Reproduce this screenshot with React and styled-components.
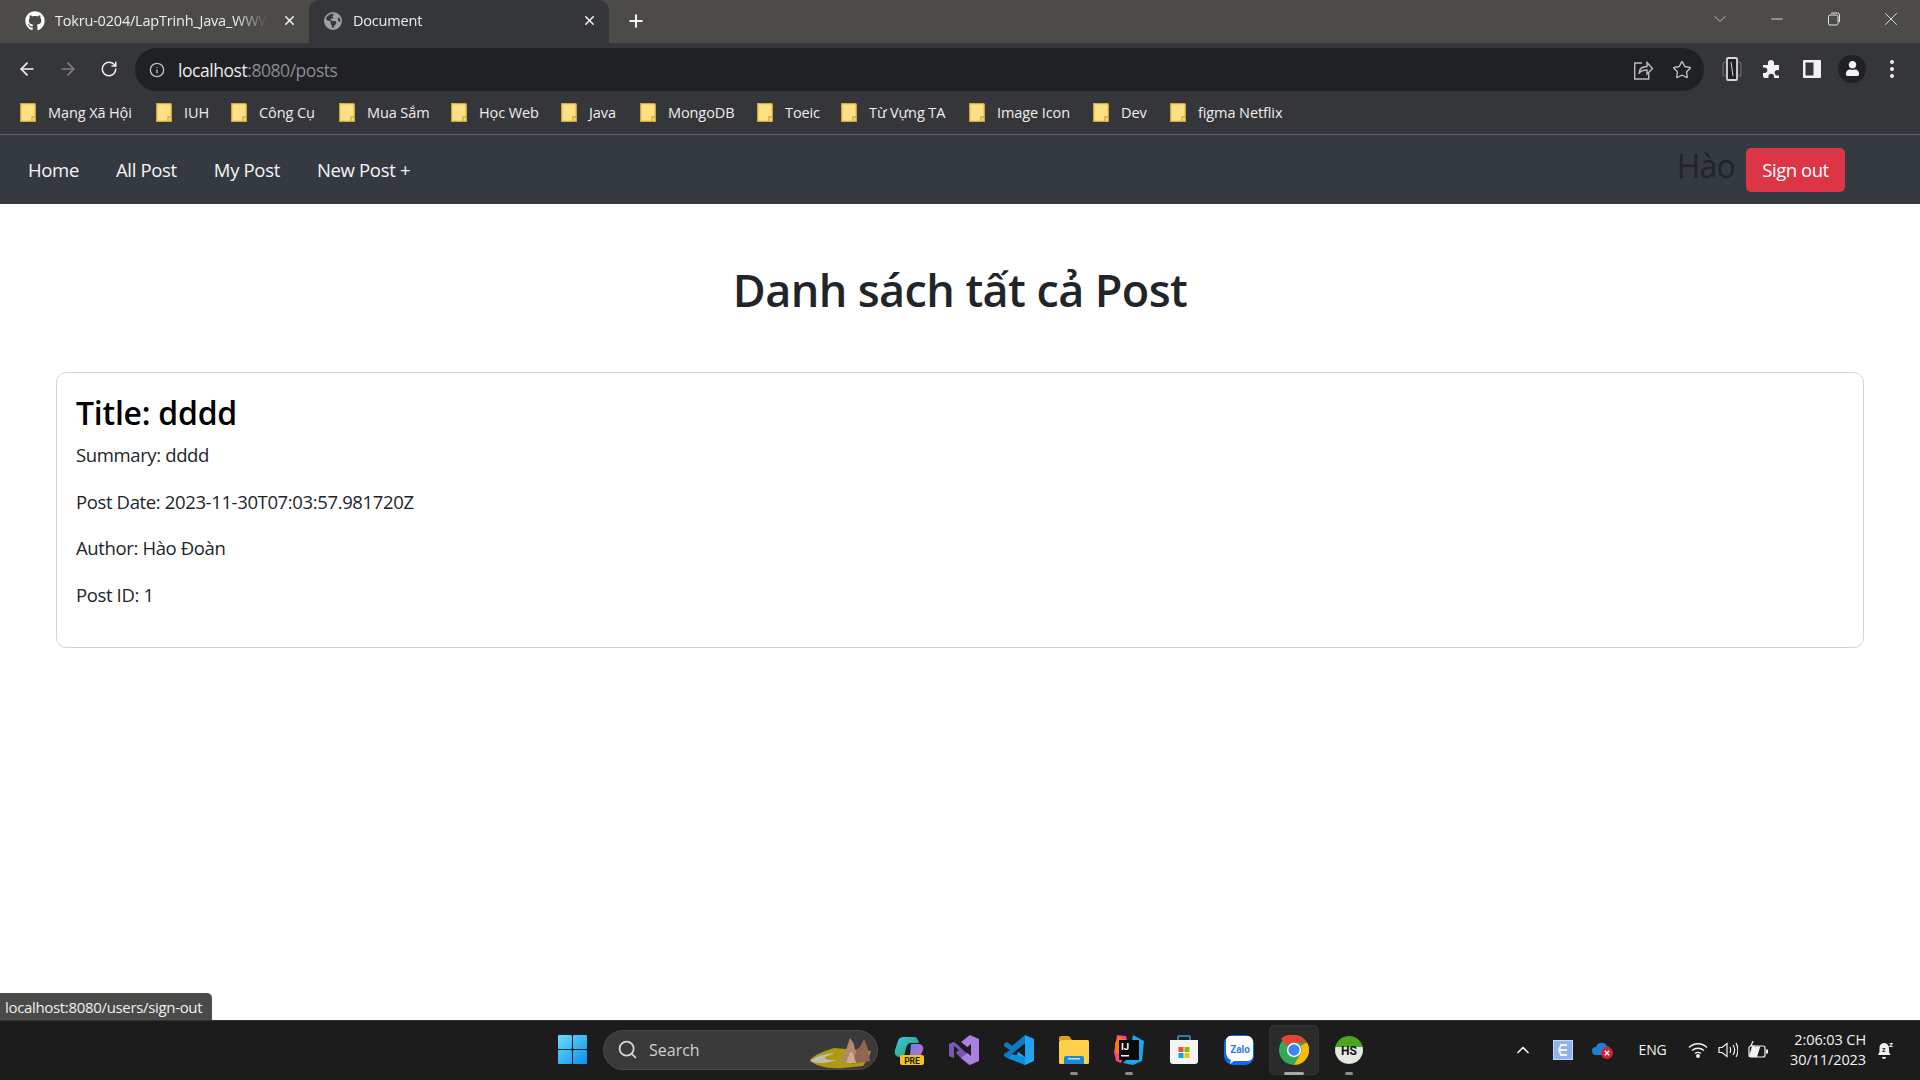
import styled, { createGlobalStyle } from 'styled-components';
import { ArrowLeft, ArrowRight, RotateCw, Info, Star, Plus, X, ChevronDown, ChevronUp, Minus, Search } from 'lucide-react';
import { FaGithub, FaUser } from 'react-icons/fa';
import { FaEarthAmericas } from 'react-icons/fa6';

const UI_FONT = `"Open Sans", "Noto Sans", sans-serif`;

const GlobalStyle = createGlobalStyle`
  html, body { margin: 0; padding: 0; background: #fff; }
  * { box-sizing: border-box; }
  body { font-family: ${UI_FONT}; overflow: hidden; }
`;

const bookmarks = [
  { name: 'Mạng Xã Hội', w: 86 },
  { name: 'IUH', w: 25 },
  { name: 'Công Cụ', w: 58 },
  { name: 'Mua Sắm', w: 62 },
  { name: 'Học Web', w: 60 },
  { name: 'Java', w: 29 },
  { name: 'MongoDB', w: 67 },
  { name: 'Toeic', w: 34 },
  { name: 'Từ Vựng TA', w: 78 },
  { name: 'Image Icon', w: 74 },
  { name: 'Dev', w: 27 },
  { name: 'figma Netflix', w: 85 },
];

const navLinks = ['Home', 'All Post', 'My Post', 'New Post +'];

const post = {
  title: 'dddd',
  summary: 'dddd',
  postDate: '2023-11-30T07:03:57.981720Z',
  author: 'Hào Đoàn',
  id: 1,
};

function FolderIcon() {
  return (
    <svg width="16" height="19" viewBox="0 0 16 19">
      <path d="M.7.7h13.6a1 1 0 0 1 1 1v16.6H.7z" fill="#fde083" stroke="#d1aa3f" strokeWidth="1.3" />
      <path d="M12 18v-4h3" fill="none" stroke="#d1aa3f" strokeWidth="1.3" />
    </svg>
  );
}

function ShareIcon() {
  return (
    <svg width="22" height="22" viewBox="0 0 22 22" fill="none" stroke="#b9babc" strokeWidth="1.4">
      <path d="M10 4H2.7v16h14v-6" />
      <path d="M7 15c0-5 3-7.500 8-7.500V3.500l5.500 6-5.500 5.500v-4c-4 0-6.500 1-8 3.500z" />
    </svg>
  );
}

function DeviceIcon() {
  return (
    <svg width="20" height="24" viewBox="0 0 20 24" fill="none">
      <rect x="1" y="5" width="18" height="14" rx="2" stroke="#6a6b6e" strokeWidth="1.2" />
      <rect x="5" y="1" width="10" height="22" rx="1" fill="#202124" stroke="#d8d8d8" strokeWidth="1.8" />
      <path d="M9 5l2 14" stroke="#d8d8d8" strokeWidth="1" />
    </svg>
  );
}

function PuzzleIcon() {
  return (
    <svg width="20" height="20" viewBox="0 0 20 20">
      <path d="M1 6h5V4a3 3 0 0 1 6 0v2h5v5h-1.500a2.800 2.800 0 0 0 0 5.600H17V19h-5v-1.500a2.800 2.800 0 0 0-5.600 0V19H3a2 2 0 0 1-2-2v-3h1.500a2.800 2.800 0 0 0 0-5.600H1z" fill="#f4f4f4" />
    </svg>
  );
}

function SidePanelIcon() {
  return (
    <svg width="18" height="18" viewBox="0 0 18 18">
      <rect width="18" height="18" rx="1" fill="#f1f1f1" />
      <rect x="2.500" y="2.500" width="8" height="13" fill="#35363a" />
    </svg>
  );
}

function RestoreIcon() {
  return (
    <svg width="14" height="14" viewBox="0 0 14 14" fill="none" stroke="#e6e6e6" strokeWidth="1">
      <rect x="1.500" y="3" width="9.500" height="10" rx="1.500" />
      <path d="M4 1h6.500a2 2 0 0 1 2 2v7" />
    </svg>
  );
}

function WindowsLogo() {
  return (
    <svg width="29" height="29" viewBox="0 0 29 29">
      <defs>
        <linearGradient id="winGrad" gradientUnits="userSpaceOnUse" x1="0" y1="0" x2="29" y2="29">
          <stop offset="0" stopColor="#6cdcfb" />
          <stop offset="1" stopColor="#0a8fee" />
        </linearGradient>
      </defs>
      <rect x="0" y="0" width="14" height="14" rx="1" fill="url(#winGrad)" />
      <rect x="15" y="0" width="14" height="14" rx="1" fill="url(#winGrad)" />
      <rect x="0" y="15" width="14" height="14" rx="1" fill="url(#winGrad)" />
      <rect x="15" y="15" width="14" height="14" rx="1" fill="url(#winGrad)" />
    </svg>
  );
}

function Mountains() {
  return (
    <svg width="64" height="34" viewBox="0 0 64 34">
      <path d="M1 25c4-5 14-9 24-12l37 3-2 6-6 9-20 2C18 34 6 31 1 25z" fill="#ad9a10" />
      <path d="M1 26c6-5 14-7 24-8-4 3-9 3-9 5 0 2 7 2 12 2-6 2-20 5-27 1z" fill="#bdbdb2" />
      <path d="M32 27l6-15 3-9 4 6 3 18z" fill="#b08770" />
      <path d="M43 29l5-15 3-2 4-8 4 10 2 12z" fill="#916651" />
      <path d="M37 28l4-11 3 1 3 10z" fill="#cfa994" />
    </svg>
  );
}

function CopilotIcon() {
  return (
    <svg width="30" height="30" viewBox="0 0 30 30">
      <defs>
        <linearGradient id="copA" x1="0" y1="0" x2="1" y2="1">
          <stop offset="0" stopColor="#35c8e8" />
          <stop offset="1" stopColor="#2f9e5f" />
        </linearGradient>
        <linearGradient id="copB" x1="0" y1="0" x2="1" y2="1">
          <stop offset="0" stopColor="#4c8df0" />
          <stop offset="1" stopColor="#e85cc8" />
        </linearGradient>
      </defs>
      <path d="M9 2h11c2 0 3 1 4 3l1 3h-8c-3 0-4 2-5 5l-2 9H6c-4 0-6-3-5-7l3-9c1-3 3-4 5-4z" fill="url(#copA)" />
      <path d="M17 9h8c3 0 5 3 4 6l-3 7c-1 2-3 3-5 3h-8c2-1 2-3 3-5l1-11z" fill="url(#copB)" />
      <rect x="6" y="20" width="24" height="10" rx="2" fill="#f6c21c" />
      <text x="18" y="28.500" textAnchor="middle" fontSize="8.500" fontWeight="700" fontFamily="Roboto, sans-serif" fill="#1c1c1c">PRE</text>
    </svg>
  );
}

function VisualStudioIcon() {
  return (
    <svg width="30" height="30" viewBox="0 0 30 30">
      <path d="M0 9l5-2 17 15-2 8-6-5L5 16z" fill="#7a55b2" />
      <path d="M0 9l5-2 6 5-6 5 0 6-5-2z" fill="#7d59b3" />
      <path d="M21 0l9 4v22l-9 4-9-7 10-8-10-8z" fill="#a97fe4" />
      <path d="M5 11l5 4-5 4z" fill="#1c1c1c" />
      <path d="M22 9v12l-7-6z" fill="#1c1c1c" />
    </svg>
  );
}

function VsCodeIcon() {
  return (
    <svg width="30" height="30" viewBox="0 0 30 30">
      <path d="M21 0l9 4v22l-9 4-9-8z" fill="#22a5ee" />
      <path d="M21 8v14l-9-7z" fill="#1c1c1c" />
      <path d="M21 0v8L8 19l-5 4-3-2 0-2 6-4-6-4V9l3-2 5 4z" fill="#0a7cc4" />
      <path d="M8 19l13 3v8L3 23z" fill="#0f8fd8" />
    </svg>
  );
}

function ExplorerIcon() {
  return (
    <svg width="30" height="28" viewBox="0 0 30 28">
      <path d="M0 2a2 2 0 0 1 2-2h8l3 4h-13z" fill="#d9a010" />
      <rect y="4" width="30" height="24" rx="1.500" fill="#fcd04a" />
      <path d="M5 22a2 2 0 0 1 2-2h16a2 2 0 0 1 2 2v6H5z" fill="#1f87d8" />
      <rect x="9" y="22" width="12" height="1.500" fill="#bfe3ff" />
    </svg>
  );
}

function IntellijIcon() {
  return (
    <svg width="30" height="30" viewBox="0 0 30 30">
      <path d="M3 0l9 1 2 8-7 19-5-2-2-9z" fill="#fd3d8e" />
      <path d="M1 8l4-6 6 2-5 14-4 1z" fill="#f97a12" />
      <path d="M19 0l11 6-2 20-9 4-10-2 6-6z" fill="#1aa7ec" />
      <rect x="5" y="5" width="20" height="20" fill="#0a0a0a" />
      <text x="7" y="14.500" fontSize="9.500" fontWeight="700" fontFamily="Roboto, sans-serif" fill="#fff">IJ</text>
      <rect x="7" y="20" width="8" height="1.500" fill="#fff" />
    </svg>
  );
}

function StoreIcon() {
  return (
    <svg width="30" height="30" viewBox="0 0 30 30">
      <path d="M9 5V2a1 1 0 0 1 1-1h10a1 1 0 0 1 1 1v3" fill="none" stroke="#19a7e8" strokeWidth="1.500" />
      <path d="M1 5h28v21a3 3 0 0 1-3 3H4a3 3 0 0 1-3-3z" fill="#f4f4f4" />
      <rect x="9.500" y="12" width="5" height="5" fill="#f35325" />
      <rect x="15.500" y="12" width="5" height="5" fill="#81bc06" />
      <rect x="9.500" y="18" width="5" height="5" fill="#05a6f0" />
      <rect x="15.500" y="18" width="5" height="5" fill="#ffba08" />
    </svg>
  );
}

function ZaloIcon() {
  return (
    <svg width="30" height="30" viewBox="0 0 30 30">
      <rect width="30" height="30" rx="9" fill="#0f6cf2" />
      <path d="M7 1h16c4 0 6 3 6 6v14c0 3-3 5-6 5H10l-4 3 1-4C3 23 2 20 2 16V6c0-3 2-5 5-5z" fill="#fff" />
      <text x="16" y="18" textAnchor="middle" fontSize="10" fontWeight="700" fontFamily="Roboto, sans-serif" fill="#2f7cf0">Zalo</text>
    </svg>
  );
}

function ChromeIcon() {
  return (
    <svg width="30" height="30" viewBox="0 0 30 30">
      <circle cx="15" cy="15" r="15" fill="#34a853" />
      <path d="M15 0a15 15 0 0 1 13 7.500H15a7.500 7.500 0 0 0-6.500 3.750L2 3.500A15 15 0 0 1 15 0z" fill="#ea4335" />
      <path d="M28 7.500A15 15 0 0 1 15 30l6.500-11.250A7.500 7.500 0 0 0 21.500 11z" fill="#fbbc04" />
      <circle cx="15" cy="15" r="7.200" fill="#fff" />
      <circle cx="15" cy="15" r="5.700" fill="#4285f4" />
    </svg>
  );
}

function HsIcon() {
  return (
    <svg width="28" height="28" viewBox="0 0 28 28">
      <circle cx="14" cy="14" r="14" fill="#4aa61d" />
      <path d="M0.500 11h27a14 14 0 0 1-.5 8 14 14 0 0 1-26 0 14 14 0 0 1-.5-8z" fill="#e6e8e2" />
      <text x="14" y="18.500" textAnchor="middle" fontSize="12" fontWeight="700" fontFamily="Roboto, sans-serif" fill="#111">HS</text>
    </svg>
  );
}

function TrayEIcon() {
  return (
    <svg width="20" height="20" viewBox="0 0 20 20">
      <rect width="20" height="20" fill="#c3d9f7" />
      <rect x="1" y="1" width="18" height="18" fill="#8fb3ea" />
      <path d="M14 5H8l-2 5 2 5h6M7 10h7" fill="none" stroke="#f4f7ff" strokeWidth="1.800" />
    </svg>
  );
}

function TrayCloudIcon() {
  return (
    <svg width="22" height="20" viewBox="0 0 22 20">
      <path d="M4 15a4 4 0 0 1 0-8 6 6 0 0 1 11-1 4 4 0 0 1 2 7l-3 2z" fill="#1e7fd6" />
      <circle cx="15" cy="13" r="6" fill="#d9202f" />
      <path d="M12.800 10.800l4.400 4.400M17.200 10.800l-4.400 4.400" stroke="#fff" strokeWidth="1.400" />
    </svg>
  );
}

function WifiIcon() {
  return (
    <svg width="20" height="16" viewBox="0 0 20 16" fill="none" stroke="#f2f2f2" strokeWidth="1.400">
      <path d="M1 5.500c5-5 13-5 18 0" />
      <path d="M4 8.500c3.500-3 8.500-3 12 0" />
      <path d="M7 11.500c2-1.500 4-1.500 6 0" />
      <circle cx="10" cy="14" r="1.200" fill="#f2f2f2" />
    </svg>
  );
}

function SpeakerIcon() {
  return (
    <svg width="20" height="18" viewBox="0 0 20 18" fill="none" stroke="#f2f2f2" strokeWidth="1.200">
      <path d="M1 6.500h3l5-4v13l-5-4H1z" />
      <path d="M12 6c1 2 1 4 0 6" />
      <path d="M15 4c2 3 2 7 0 10" />
      <path d="M18 2c2.500 4 2.500 10 0 14" />
    </svg>
  );
}

function BatteryIcon() {
  return (
    <svg width="21" height="18" viewBox="0 0 21 18" fill="none" stroke="#f2f2f2" strokeWidth="1.200">
      <rect x="1" y="5" width="16" height="11" rx="2" />
      <path d="M1.500 15.500l3-9.500h7l-3 9.500z" fill="#f2f2f2" />
      <rect x="18" y="8.500" width="2" height="4" fill="#f2f2f2" stroke="none" />
      <path d="M5 0L3 5h3l-1 3" stroke="#f2f2f2" />
    </svg>
  );
}

function BellIcon() {
  return (
    <svg width="18" height="20" viewBox="0 0 18 20">
      <path d="M7 3a5 5 0 0 0-4.500 5v4L1 15h12.500L12 12V8a5 5 0 0 0-5-5z" fill="#f2f2f2" />
      <path d="M5 17h4a2 2 0 0 1-4 0z" fill="#f2f2f2" />
      <text x="5" y="12" fontSize="7" fontWeight="700" fontFamily="Roboto, sans-serif" fill="#1c1c1c">z</text>
      <text x="12" y="7" fontSize="8" fontWeight="700" fontFamily="Roboto, sans-serif" fill="#f2f2f2">z</text>
    </svg>
  );
}

const taskbarApps = [
  { key: 'copilot', icon: <CopilotIcon /> },
  { key: 'vs', icon: <VisualStudioIcon /> },
  { key: 'vscode', icon: <VsCodeIcon /> },
  { key: 'explorer', icon: <ExplorerIcon />, running: true },
  { key: 'idea', icon: <IntellijIcon />, running: true },
  { key: 'store', icon: <StoreIcon /> },
  { key: 'zalo', icon: <ZaloIcon /> },
  { key: 'chrome', icon: <ChromeIcon />, active: true },
  { key: 'hs', icon: <HsIcon />, running: true },
];

export default function App() {
  return (
    <>
      <GlobalStyle />
      <Screen>
        <TabStrip>
          <Tab>
            <FaGithub size={20} color="#fff" />
            <TabTitle>Tokru-0204/LapTrinh_Java_WWW</TabTitle>
            <TabClose><X size={15} strokeWidth={2.5} /></TabClose>
          </Tab>
          <Tab $active>
            <FaEarthAmericas size={18} color="#9aa0a6" />
            <TabTitle>Document</TabTitle>
            <TabClose><X size={15} strokeWidth={2.5} /></TabClose>
          </Tab>
          <NewTab><Plus size={20} strokeWidth={2.5} /></NewTab>
          <WindowControls>
            <ChevronDown size={20} strokeWidth={1} color="#d8d8d8" />
            <WindowButton><Minus size={18} strokeWidth={1.2} /></WindowButton>
            <WindowButton><RestoreIcon /></WindowButton>
            <WindowButton><X size={22} strokeWidth={1} /></WindowButton>
          </WindowControls>
        </TabStrip>

        <Toolbar>
          <ToolButton><ArrowLeft size={20} /></ToolButton>
          <ToolButton $dim><ArrowRight size={20} /></ToolButton>
          <ToolButton><RotateCw size={18} /></ToolButton>
          <Omnibox>
            <Info size={16} color="#bdc1c6" />
            <Url>localhost<UrlRest>:8080/posts</UrlRest></Url>
            <OmniActions>
              <ShareIcon />
              <Star size={20} color="#c4c5c7" strokeWidth={1.6} />
            </OmniActions>
          </Omnibox>
          <ToolActions>
            <ToolButton $w={40}><DeviceIcon /></ToolButton>
            <ToolButton $w={40}><PuzzleIcon /></ToolButton>
            <ToolButton $w={40}><SidePanelIcon /></ToolButton>
            <ToolButton $w={40}><ProfileDot><FaUser size={15} /></ProfileDot></ToolButton>
            <ToolButton $w={40}><Kebab><i /><i /><i /></Kebab></ToolButton>
          </ToolActions>
        </Toolbar>

        <BookmarkBar>
          {bookmarks.map((b) => (
            <Bookmark key={b.name}>
              <FolderIcon />
              <BookmarkName $w={b.w}>{b.name}</BookmarkName>
            </Bookmark>
          ))}
        </BookmarkBar>

        <Page>
          <Navbar>
            <NavLinks>
              {navLinks.map((link) => (
                <NavLink key={link}>{link}</NavLink>
              ))}
            </NavLinks>
            <NavUser>
              <UserName>Hào</UserName>
              <SignOut>Sign out</SignOut>
            </NavUser>
          </Navbar>

          <Main>
            <Heading>Danh sách tất cả Post</Heading>
            <PostCard>
              <PostTitle>Title: {post.title}</PostTitle>
              <PostLine>Summary: {post.summary}</PostLine>
              <PostLine>Post Date: {post.postDate}</PostLine>
              <PostLine>Author: {post.author}</PostLine>
              <PostLine>Post ID: {post.id}</PostLine>
            </PostCard>
          </Main>
          <StatusBubble>localhost:8080/users/sign-out</StatusBubble>
        </Page>

        <Taskbar>
          <StartSlot><WindowsLogo /></StartSlot>
          <SearchBox>
            <Search size={21} color="#d8d8d8" strokeWidth={2} />
            <SearchLabel>Search</SearchLabel>
            <SearchArt><Mountains /></SearchArt>
          </SearchBox>
          <AppGroup>
            {taskbarApps.map((app) => (
              <AppSlot key={app.key} $active={app.active}>
                {app.icon}
                {(app.running || app.active) && <RunDot $active={app.active} />}
              </AppSlot>
            ))}
          </AppGroup>
          <Tray>
            <TraySlot $w={40}><ChevronUp size={20} color="#f2f2f2" strokeWidth={2} /></TraySlot>
            <TraySlot $w={40}><TrayEIcon /></TraySlot>
            <TraySlot $w={40}><TrayCloudIcon /></TraySlot>
            <TraySlot $w={59}><TrayLang>ENG</TrayLang></TraySlot>
            <TraySlot $w={31}><WifiIcon /></TraySlot>
            <TraySlot $w={30}><SpeakerIcon /></TraySlot>
            <TraySlot $w={30}><BatteryIcon /></TraySlot>
            <Clock>
              <span>2:06:03 CH</span>
              <span>30/11/2023</span>
            </Clock>
            <TraySlot $w={24}><BellIcon /></TraySlot>
          </Tray>
        </Taskbar>
      </Screen>
    </>
  );
}

const Screen = styled.div`
  width: 1920px;
  height: 1080px;
  display: flex;
  flex-direction: column;
  background: #fff;
`;

const TabStrip = styled.div`
  height: 43px;
  display: flex;
  align-items: stretch;
  background: #4c4b48;
  color: #eceded;
`;

const Tab = styled.div`
  display: flex;
  align-items: center;
  width: ${(p) => (p.$active ? '300px' : '309px')};
  padding: 0 12px 2px ${(p) => (p.$active ? '15px' : '25px')};
  gap: ${(p) => (p.$active ? '11px' : '10px')};
  background: ${(p) => (p.$active ? '#35363a' : 'transparent')};
  border-radius: ${(p) => (p.$active ? '10px 10px 0 0' : '0')};
  font-size: 14.5px;
  letter-spacing: -0.2px;
`;

const TabTitle = styled.span`
  flex: 1;
  min-width: 0;
  overflow: hidden;
  white-space: nowrap;
  -webkit-mask-image: linear-gradient(to right, #000 85%, transparent);
  mask-image: linear-gradient(to right, #000 85%, transparent);
`;

const TabClose = styled.span`
  display: flex;
  color: #f0f0f0;
  margin-left: 5px;
`;

const NewTab = styled.div`
  width: 54px;
  display: flex;
  align-items: center;
  justify-content: center;
  padding-bottom: 2px;
  color: #f0f0f0;
`;

const WindowControls = styled.div`
  margin-left: auto;
  display: flex;
  align-items: center;
  padding: 0 1px 6px 0;
  color: #e6e6e6;
`;

const WindowButton = styled.div`
  width: 57px;
  height: 36px;
  display: flex;
  align-items: center;
  justify-content: center;
  &:first-of-type { margin-left: 18px; }
`;

const Toolbar = styled.div`
  height: 48px;
  padding: 5px 8px 0 6px;
  display: flex;
  align-items: center;
  background: #35363a;
  color: #f0f0f0;
`;

const ToolButton = styled.div`
  width: ${(p) => (p.$w ? `${p.$w}px` : '41px')};
  padding-bottom: 2px;
  display: flex;
  align-items: center;
  justify-content: center;
  color: ${(p) => (p.$dim ? '#7d7e81' : '#f1f1f1')};
`;

const Omnibox = styled.div`
  width: 1569px;
  height: 43px;
  margin-left: 6px;
  padding: 0 11px 0 14px;
  display: flex;
  align-items: center;
  background: #202124;
  border-radius: 22px;
`;

const Url = styled.span`
  margin-left: 13px;
  font-size: 17.5px;
  letter-spacing: -0.45px;
  color: #ececec;
`;

const UrlRest = styled.span`
  color: #8b8c8f;
`;

const OmniActions = styled.div`
  margin-left: auto;
  display: flex;
  align-items: center;
  gap: 18px;
  padding-right: 1px;
`;

const ToolActions = styled.div`
  display: flex;
  margin-left: 8px;
`;

const ProfileDot = styled.div`
  width: 28px;
  height: 28px;
  border-radius: 50%;
  background: #202124;
  display: flex;
  align-items: center;
  justify-content: center;
  color: #f4f4f4;
`;

const Kebab = styled.div`
  display: flex;
  flex-direction: column;
  gap: 3px;
  i {
    display: block;
    width: 4px;
    height: 4px;
    border-radius: 50%;
    background: #eeeeee;
  }
`;

const BookmarkBar = styled.div`
  height: 44px;
  padding: 0 0 1px 20px;
  display: flex;
  align-items: center;
  gap: 22px;
  background: #35363a;
  border-bottom: 1px solid #5c5e62;
`;

const Bookmark = styled.div`
  display: flex;
  align-items: center;
  gap: 12px;
`;

const BookmarkName = styled.span`
  width: ${(p) => p.$w}px;
  font-size: 14.5px;
  letter-spacing: -0.1px;
  white-space: nowrap;
  color: #eeeeee;
`;

const Page = styled.div`
  position: relative;
  flex: 1;
  min-height: 0;
  display: flex;
  flex-direction: column;
  background: #fff;
`;

const Navbar = styled.nav`
  height: 69px;
  padding: 0 75px 0 28px;
  display: flex;
  align-items: center;
  justify-content: space-between;
  background: #343a40;
`;

const NavLinks = styled.div`
  display: flex;
  gap: 37px;
`;

const NavLink = styled.a`
  font-size: 18.5px;
  letter-spacing: -0.33px;
  color: #f4f5f6;
`;

const NavUser = styled.div`
  display: flex;
  align-items: center;
  gap: 11px;
`;

const UserName = styled.span`
  font-size: 32px;
  letter-spacing: -0.8px;
  line-height: 36px;
  margin-top: -7px;
  color: #212529;
`;

const SignOut = styled.button`
  width: 99px;
  height: 44px;
  padding: 0;
  border: none;
  border-radius: 5px;
  background: #dc3545;
  color: #fff;
  font-family: ${UI_FONT};
  font-size: 18.5px;
  letter-spacing: -0.45px;
`;

const Main = styled.main`
  padding: 0 56px;
  color: #212529;
`;

const Heading = styled.h1`
  margin: 56px 0 52px;
  text-align: center;
  font-size: 45px;
  line-height: 60px;
  font-weight: 600;
  letter-spacing: -0.6px;
`;

const PostCard = styled.section`
  height: 276px;
  padding: 18px 19px;
  border: 1px solid #d3d3d3;
  border-radius: 10px;
`;

const PostTitle = styled.h2`
  margin: 0 0 6px;
  font-size: 32px;
  line-height: 44px;
  font-weight: 600;
  letter-spacing: -0.25px;
  color: #000;
`;

const PostLine = styled.p`
  margin: 0 0 19.500px;
  font-size: 18.5px;
  line-height: 27px;
  letter-spacing: -0.37px;
`;

const StatusBubble = styled.div`
  position: absolute;
  left: 0;
  bottom: 0;
  width: 212px;
  height: 27px;
  padding-left: 5px;
  display: flex;
  align-items: center;
  background: #4a4a48;
  border-radius: 0 5px 0 0;
  color: #f0f0f0;
  font-size: 15px;
  letter-spacing: -0.33px;
  white-space: nowrap;
`;

const Taskbar = styled.footer`
  height: 60px;
  padding: 0 0 2px 545px;
  display: flex;
  align-items: center;
  background: #1c1c1c;
  border-top: 1px solid #333;
`;

const StartSlot = styled.div`
  width: 55px;
  display: flex;
  justify-content: center;
`;

const SearchBox = styled.div`
  position: relative;
  width: 275px;
  height: 40px;
  margin-left: 3px;
  padding-left: 13px;
  display: flex;
  align-items: center;
  background: #3a3a3a;
  border: 1px solid #4a4a4a;
  border-radius: 20px;
`;

const SearchLabel = styled.span`
  margin-left: 11px;
  font-size: 16px;
  color: #d0d0d0;
`;

const SearchArt = styled.div`
  position: absolute;
  right: 4px;
  top: 4px;
  display: flex;
`;

const AppGroup = styled.div`
  display: flex;
  margin-left: 3px;
`;

const AppSlot = styled.div`
  position: relative;
  width: 55px;
  height: 50px;
  display: flex;
  align-items: center;
  justify-content: center;
  &::before {
    content: '';
    display: ${(p) => (p.$active ? 'block' : 'none')};
    position: absolute;
    inset: 0 2.500px;
    background: #2b2b2b;
    border: 1px solid #333;
    border-radius: 5px;
  }
  svg { position: relative; }
`;

const RunDot = styled.span`
  position: absolute;
  left: 50%;
  bottom: 0;
  width: ${(p) => (p.$active ? '20px' : '8px')};
  height: 3px;
  transform: translateX(-50%);
  border-radius: 2px;
  background: ${(p) => (p.$active ? '#a8a8a8' : '#8c8c8c')};
`;

const Tray = styled.div`
  margin-left: auto;
  padding-right: 22px;
  display: flex;
  align-items: center;
  color: #f2f2f2;
`;

const TraySlot = styled.div`
  width: ${(p) => p.$w}px;
  display: flex;
  justify-content: center;
  align-items: center;
`;

const TrayLang = styled.span`
  font-size: 14px;
  letter-spacing: -0.2px;
`;

const Clock = styled.div`
  width: 93px;
  margin-right: 8px;
  display: flex;
  flex-direction: column;
  align-items: flex-end;
  gap: 2px;
  font-size: 14.5px;
  line-height: 18px;
  letter-spacing: -0.1px;
`;
